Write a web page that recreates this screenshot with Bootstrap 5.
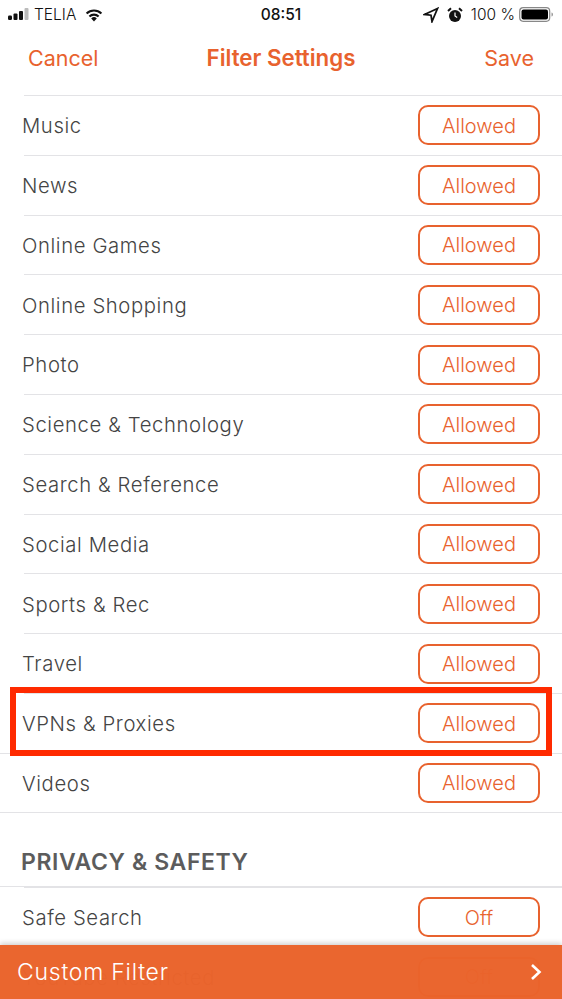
<!DOCTYPE html>
<html lang="en">
<head>
    <meta charset="UTF-8">
    <meta name="viewport" content="width=device-width, initial-scale=1.0">
    <title>Filter Settings</title>
    <link href="https://cdn.jsdelivr.net/npm/bootstrap@5.3.0/dist/css/bootstrap.min.css" rel="stylesheet">
    <style>
        html, body { background: #fff; }
        .phone { width: 562px; height: 999px; overflow: hidden; position: relative; font-family: "Inter", "Liberation Sans", sans-serif; }
        .status-bar { height: 29px; padding: 0 8px; font-size: 15.5px; color: #111; font-weight: 300; }
        .status-bar .clock { font-weight: 500; font-size: 15.5px; }
        .status-side { width: 240px; }
        .nav-bar { height: 66px; padding: 0 28px 8px; color: #e8622e; font-size: 21.5px; }
        .nav-bar .title { font-weight: 600; font-size: 22.3px; }
        .nav-side { width: 100px; }
        .rows { list-style: none; margin: 0; padding: 0; }
        .filter-row { height: 59.8px; margin-left: 24px; padding-right: 22px; border-top: 1.5px solid #e3e3e6; }
        .filter-row .name { margin-left: -2px; padding-top: 2px; font-size: 20.3px; font-weight: 300; color: #444; letter-spacing: .6px; }
        .pill { width: 122px; height: 40px; border: 2px solid #e8622e; border-radius: 10px; color: #e8622e; font-size: 20px; font-weight: 300; background: #fff; padding: 1px 0 0; }
        .last-row { height: 60px; border-bottom: 1.5px solid #e3e3e6; margin-left: 0; padding-left: 24px; }
        .section-title { height: 74px; padding: 36px 21px 0; font-weight: 600; font-size: 23px; color: #5c5c5c; letter-spacing: .6px; line-height: 26px; border-bottom: 1.5px solid #e3e3e6; }
        .mark-box { position: absolute; left: 10px; top: 687px; width: 542px; height: 69px; border: 6px solid #ff2a00; pointer-events: none; }
        .custom-bar { position: absolute; left: 0; right: 0; top: 945px; height: 54px; padding: 0 20px 0 17px; background: rgba(234, 100, 44, .985); box-shadow: 0 -2px 5px rgba(0, 0, 0, .18); color: #fff; font-size: 23px; font-weight: 300; letter-spacing: .75px; }
    </style>
</head>
<body>
    <div class="phone">
        <div class="status-bar d-flex align-items-center justify-content-between">
            <div class="status-side d-flex align-items-center gap-1">
                <svg width="22" height="13" viewBox="0 0 22 13">
                    <rect x="0" y="7.5" width="4" height="4.5" rx="1.2" fill="#111"/>
                    <rect x="5.5" y="5.5" width="4" height="6.5" rx="1" fill="#111"/>
                    <rect x="11" y="3" width="4" height="9" rx="1" fill="#111"/>
                    <rect x="16.5" y="0" width="4" height="12" rx="1" fill="#bbb"/>
                </svg>
                <span>TELIA</span>
                <svg class="ms-1" width="20" height="14" viewBox="0 0 20 14">
                    <path d="M10 13.5 7.2 10.4a4 4 0 0 1 5.6 0Z" fill="#111"/>
                    <path d="M5.4 8.5a6.7 6.7 0 0 1 9.2 0" fill="none" stroke="#111" stroke-width="2.1"/>
                    <path d="M2.6 5.4a10.7 10.7 0 0 1 14.8 0" fill="none" stroke="#111" stroke-width="2.1"/>
                </svg>
            </div>
            <span class="clock">08:51</span>
            <div class="status-side d-flex align-items-center justify-content-end">
                <svg width="16" height="16" viewBox="0 0 16 16">
                    <path d="M14.5 1.5 1.5 7.5 8 8.2 9 14.5Z" fill="none" stroke="#111" stroke-width="1.8"/>
                </svg>
                <svg class="ms-2" width="16" height="16" viewBox="0 0 16 16">
                    <circle cx="8" cy="9" r="6" fill="#111"/>
                    <path d="M8 5.5V9l2.2 1.4" fill="none" stroke="#fff" stroke-width="1.2"/>
                    <path d="M1 4 4 1.3M15 4 12 1.3" stroke="#111" stroke-width="2" fill="none"/>
                </svg>
                <span class="ms-2">100 %</span>
                <svg class="ms-1" width="35" height="15" viewBox="0 0 35 15">
                    <rect x=".7" y=".7" width="30" height="13.6" rx="3.5" fill="none" stroke="#888" stroke-width="1.2"/>
                    <rect x="2.5" y="2.5" width="26.5" height="10" rx="2" fill="#000"/>
                    <path d="M32.5 5.5c1 .3 1.5 1 1.5 2s-.5 1.7-1.5 2Z" fill="#999"/>
                </svg>
            </div>
        </div>

        <div class="nav-bar d-flex align-items-center justify-content-between">
            <span class="nav-side">Cancel</span>
            <span class="title">Filter Settings</span>
            <span class="nav-side text-end">Save</span>
        </div>

        <ul class="rows" id="categories"></ul>

        <div class="section-title">PRIVACY &amp; SAFETY</div>

        <ul class="rows" id="privacy"></ul>

        <div class="mark-box"></div>

        <div class="custom-bar d-flex align-items-center justify-content-between">
            <span>Custom Filter</span>
            <svg width="12" height="18" viewBox="0 0 12 18">
                <path d="M2 2l7.5 7L2 16" fill="none" stroke="#fff" stroke-width="2.6"/>
            </svg>
        </div>
    </div>

    <script src="https://cdn.jsdelivr.net/npm/bootstrap@5.3.0/dist/js/bootstrap.bundle.min.js"></script>
    <script>
        const categories = ['Music', 'News', 'Online Games', 'Online Shopping', 'Photo', 'Science & Technology',
            'Search & Reference', 'Social Media', 'Sports & Rec', 'Travel', 'VPNs & Proxies', 'Videos'];
        const privacy = ['Safe Search', 'YouTube Restricted'];

        function addRows(listId, names, value) {
            const list = document.getElementById(listId);
            names.forEach(name => {
                const row = document.createElement('li');
                row.className = 'filter-row d-flex align-items-center justify-content-between';
                const label = document.createElement('span');
                label.className = 'name';
                label.textContent = name;
                const pill = document.createElement('button');
                pill.className = 'pill';
                pill.textContent = value;
                row.append(label, pill);
                list.appendChild(row);
            });
        }

        addRows('categories', categories, 'Allowed');
        addRows('privacy', privacy, 'Off');
        document.querySelector('#categories li:last-child').classList.add('last-row');
    </script>
</body>
</html>
